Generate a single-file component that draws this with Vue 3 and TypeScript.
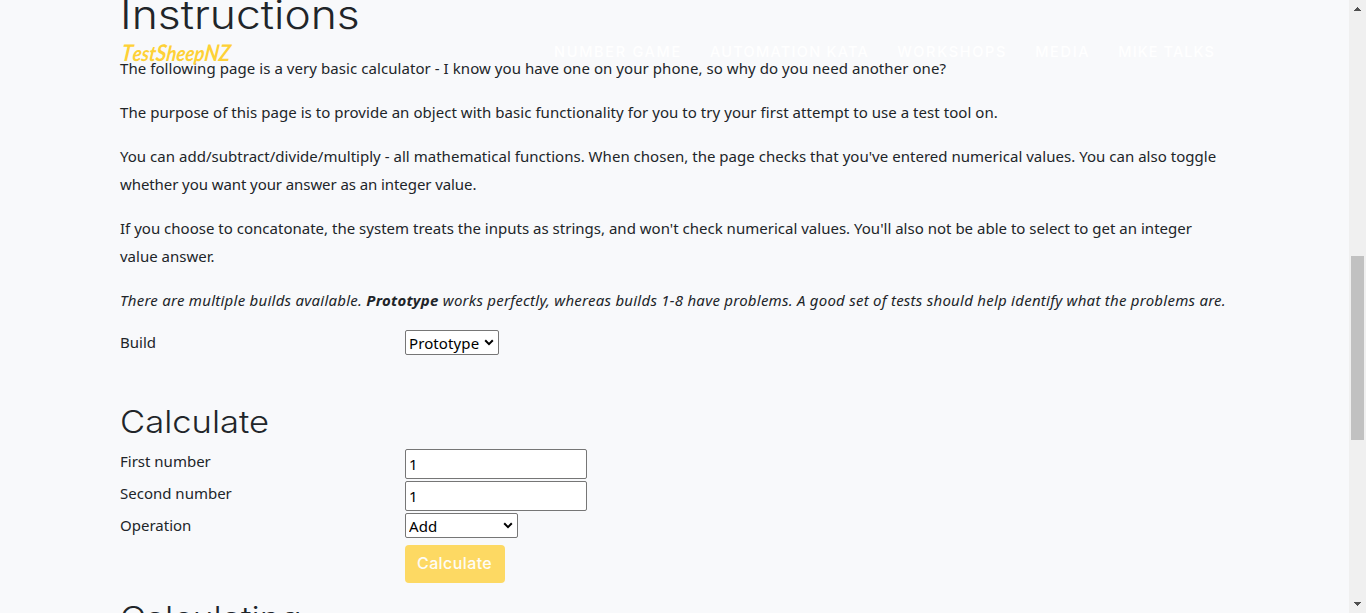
<script setup lang="ts">
import { ref } from 'vue'

const links = [
  { label: 'Number Game', id: 'number' },
  { label: 'Automation Kata', id: 'kata' },
  { label: 'Workshops', id: 'workshops' },
  { label: 'Media', id: 'media' },
  { label: 'Mike Talks', id: 'talks' },
]
const builds = ['Prototype', '1', '2', '3', '4', '5', '6', '7', '8']
const operations = ['Add', 'Subtract', 'Multiply', 'Divide', 'Concatenate']
const build = ref('Prototype')
const operation = ref('Add')
const first = ref('1')
const second = ref('1')
</script>

<template>
  <div class="page">
    <main class="content">
      <h1><span>Instructions</span></h1>
      <p><span class="l1">The following page is a very basic calculator - I know you have one on your phone, so why do you need another one?</span></p>
      <p><span class="l2">The purpose of this page is to provide an object with basic functionality for you to try your first attempt to use a test tool on.</span></p>
      <p>
        <span class="l3">You can add/subtract/divide/multiply - all mathematical functions. When chosen, the page checks that you've entered numerical values. You can also toggle</span>
        <span class="l4">whether you want your answer as an integer value.</span>
      </p>
      <p>
        <span class="l5">If you choose to concatonate, the system treats the inputs as strings, and won't check numerical values. You'll also not be able to select to get an integer</span>
        <span class="l6">value answer.</span>
      </p>
      <p class="note"><span class="l7">There are multiple builds available. <b>Prototype</b> works perfectly, whereas builds 1-8 have problems. A good set of tests should help identify what the problems are.</span></p>

      <div class="row build-row">
        <label for="build">Build</label>
        <div class="select build">
          <select id="build" v-model="build"><option v-for="b in builds" :key="b">{{ b }}</option></select>
          <svg viewBox="0 0 10 7"><path d="M1.2 1.3 5 5.1 8.8 1.3" /></svg>
        </div>
      </div>

      <h2 class="calc"><span>Calculate</span></h2>
      <div class="row">
        <label for="first">First number</label>
        <input id="first" v-model="first" type="text" />
      </div>
      <div class="row">
        <label for="second">Second number</label>
        <input id="second" v-model="second" type="text" />
      </div>
      <div class="row">
        <label for="operation">Operation</label>
        <div class="select operation">
          <select id="operation" v-model="operation"><option v-for="o in operations" :key="o">{{ o }}</option></select>
          <svg viewBox="0 0 10 7"><path d="M1.2 1.3 5 5.1 8.8 1.3" /></svg>
        </div>
      </div>
      <button type="button"><span>Calculate</span></button>
      <h2 class="result"><span>Calculating</span></h2>
    </main>

    <nav>
      <a class="brand"><span class="cap">T</span>est<span class="cap">S</span>heep<span class="cap">NZ</span></a>
      <div class="links">
        <a v-for="l in links" :key="l.id" :class="l.id">{{ l.label }}</a>
      </div>
    </nav>

    <div class="scrollbar">
      <svg viewBox="0 0 7 4"><path d="M3 0h1v1h1v1h1v1h1v1H0V3h1V2h1V1h1z" /></svg>
      <div class="thumb"></div>
      <svg viewBox="0 0 7 4"><path d="M0 0h7v1H6v1H5v1H4v1H3V3H2V2H1V1H0z" /></svg>
    </div>
  </div>
</template>

<style>
body { margin: 0; overflow: hidden; }
</style>

<style scoped>
* { box-sizing: border-box; }
.page {
  position: relative;
  display: flex;
  width: 1366px;
  height: 613px;
  overflow: hidden;
  background: #f8f9fb;
  color: #212529;
  font: 15px/28px "Noto Sans", "Open Sans", sans-serif;
}
.content { width: 1349px; padding-left: 120px; }
h1, h2 { font-family: Inter, sans-serif; font-weight: 300; white-space: nowrap; }
h1 span, h2 span { display: inline-block; transform-origin: 0 50%; }
h1 { height: 48px; margin: -9px 0 15px; font-size: 39px; line-height: 48px; }
h1 span { transform: scaleX(1.138); }
h2 { height: 38px; margin: 0; font-size: 31px; line-height: 38px; }
.calc span { transform: scaleX(1.115); }
.result span { transform: scaleX(1.135); }
p { margin: 0 0 16px; white-space: nowrap; }
p > span { display: block; width: max-content; }
.l1 { letter-spacing: 0.066px; }
.l2 { letter-spacing: 0.047px; }
.l3 { letter-spacing: 0.026px; }
.l4 { letter-spacing: -0.08px; }
.l5 { letter-spacing: 0.01px; }
.l7 { letter-spacing: 0.25px; }
.note { font-style: italic; margin-bottom: 16px; }
.row { display: flex; height: 32px; }
.row label { width: 285px; line-height: 24px; }
.build-row { height: 73px; }
input, .select { border: 1px solid #767676; border-radius: 2px; background: #fff; color: #000; }
input { width: 182px; height: 30px; padding: 2px 3px; font: 15px "Noto Sans", sans-serif; }
.select { position: relative; height: 25px; }
.select.build { width: 94px; }
.select.operation { width: 113px; }
select {
  display: block; width: 100%; height: 23px; padding: 2px 3px 0; border: 0; background: transparent;
  appearance: none; color: #000; font: 15px/21px "Noto Sans", sans-serif; letter-spacing: 0.1px;
}
.select svg { position: absolute; right: 4px; top: 8px; width: 10px; height: 7px; fill: none; stroke: #000; stroke-width: 2; }
.calc { margin-bottom: 8px; }
button {
  display: block; width: 100px; height: 38px; margin-left: 285px; padding: 0 12px 2px;
  border: 0; border-radius: 4px; background: #fdd963; color: #fefcf5;
  font: 500 16px Inter, sans-serif; letter-spacing: 0.4px; text-align: left; white-space: nowrap;
}
.result { margin-top: 16px; }
nav {
  position: absolute; left: 120px; top: 32px; width: 1110px; height: 40px;
  display: flex; align-items: center; justify-content: space-between;
}
.brand {
  padding-left: 2px; color: #fed136; font: italic 700 21px/40px Lato, sans-serif; white-space: nowrap;
  transform: scaleX(0.88) skewX(-8deg); transform-origin: 0 50%;
}
.cap { font-size: 23px; }
.links { display: flex; gap: 28px; padding-right: 15px; }
.links a { color: #fff; font: 500 14.5px/40px Inter, sans-serif; letter-spacing: 1.7px; text-transform: uppercase; white-space: nowrap; }
.links .kata { letter-spacing: 1.28px; }
.links .talks { letter-spacing: 1.1px; }
.scrollbar {
  width: 17px; height: 613px; padding: 7px 0; background: #f0f0f0;
  display: flex; flex-direction: column; align-items: center; justify-content: space-between;
}
.scrollbar svg { width: 7px; height: 4px; fill: #505050; shape-rendering: crispEdges; }
.thumb { width: 13px; height: 184px; margin-top: 82px; background: #c1c1c1; }
</style>
